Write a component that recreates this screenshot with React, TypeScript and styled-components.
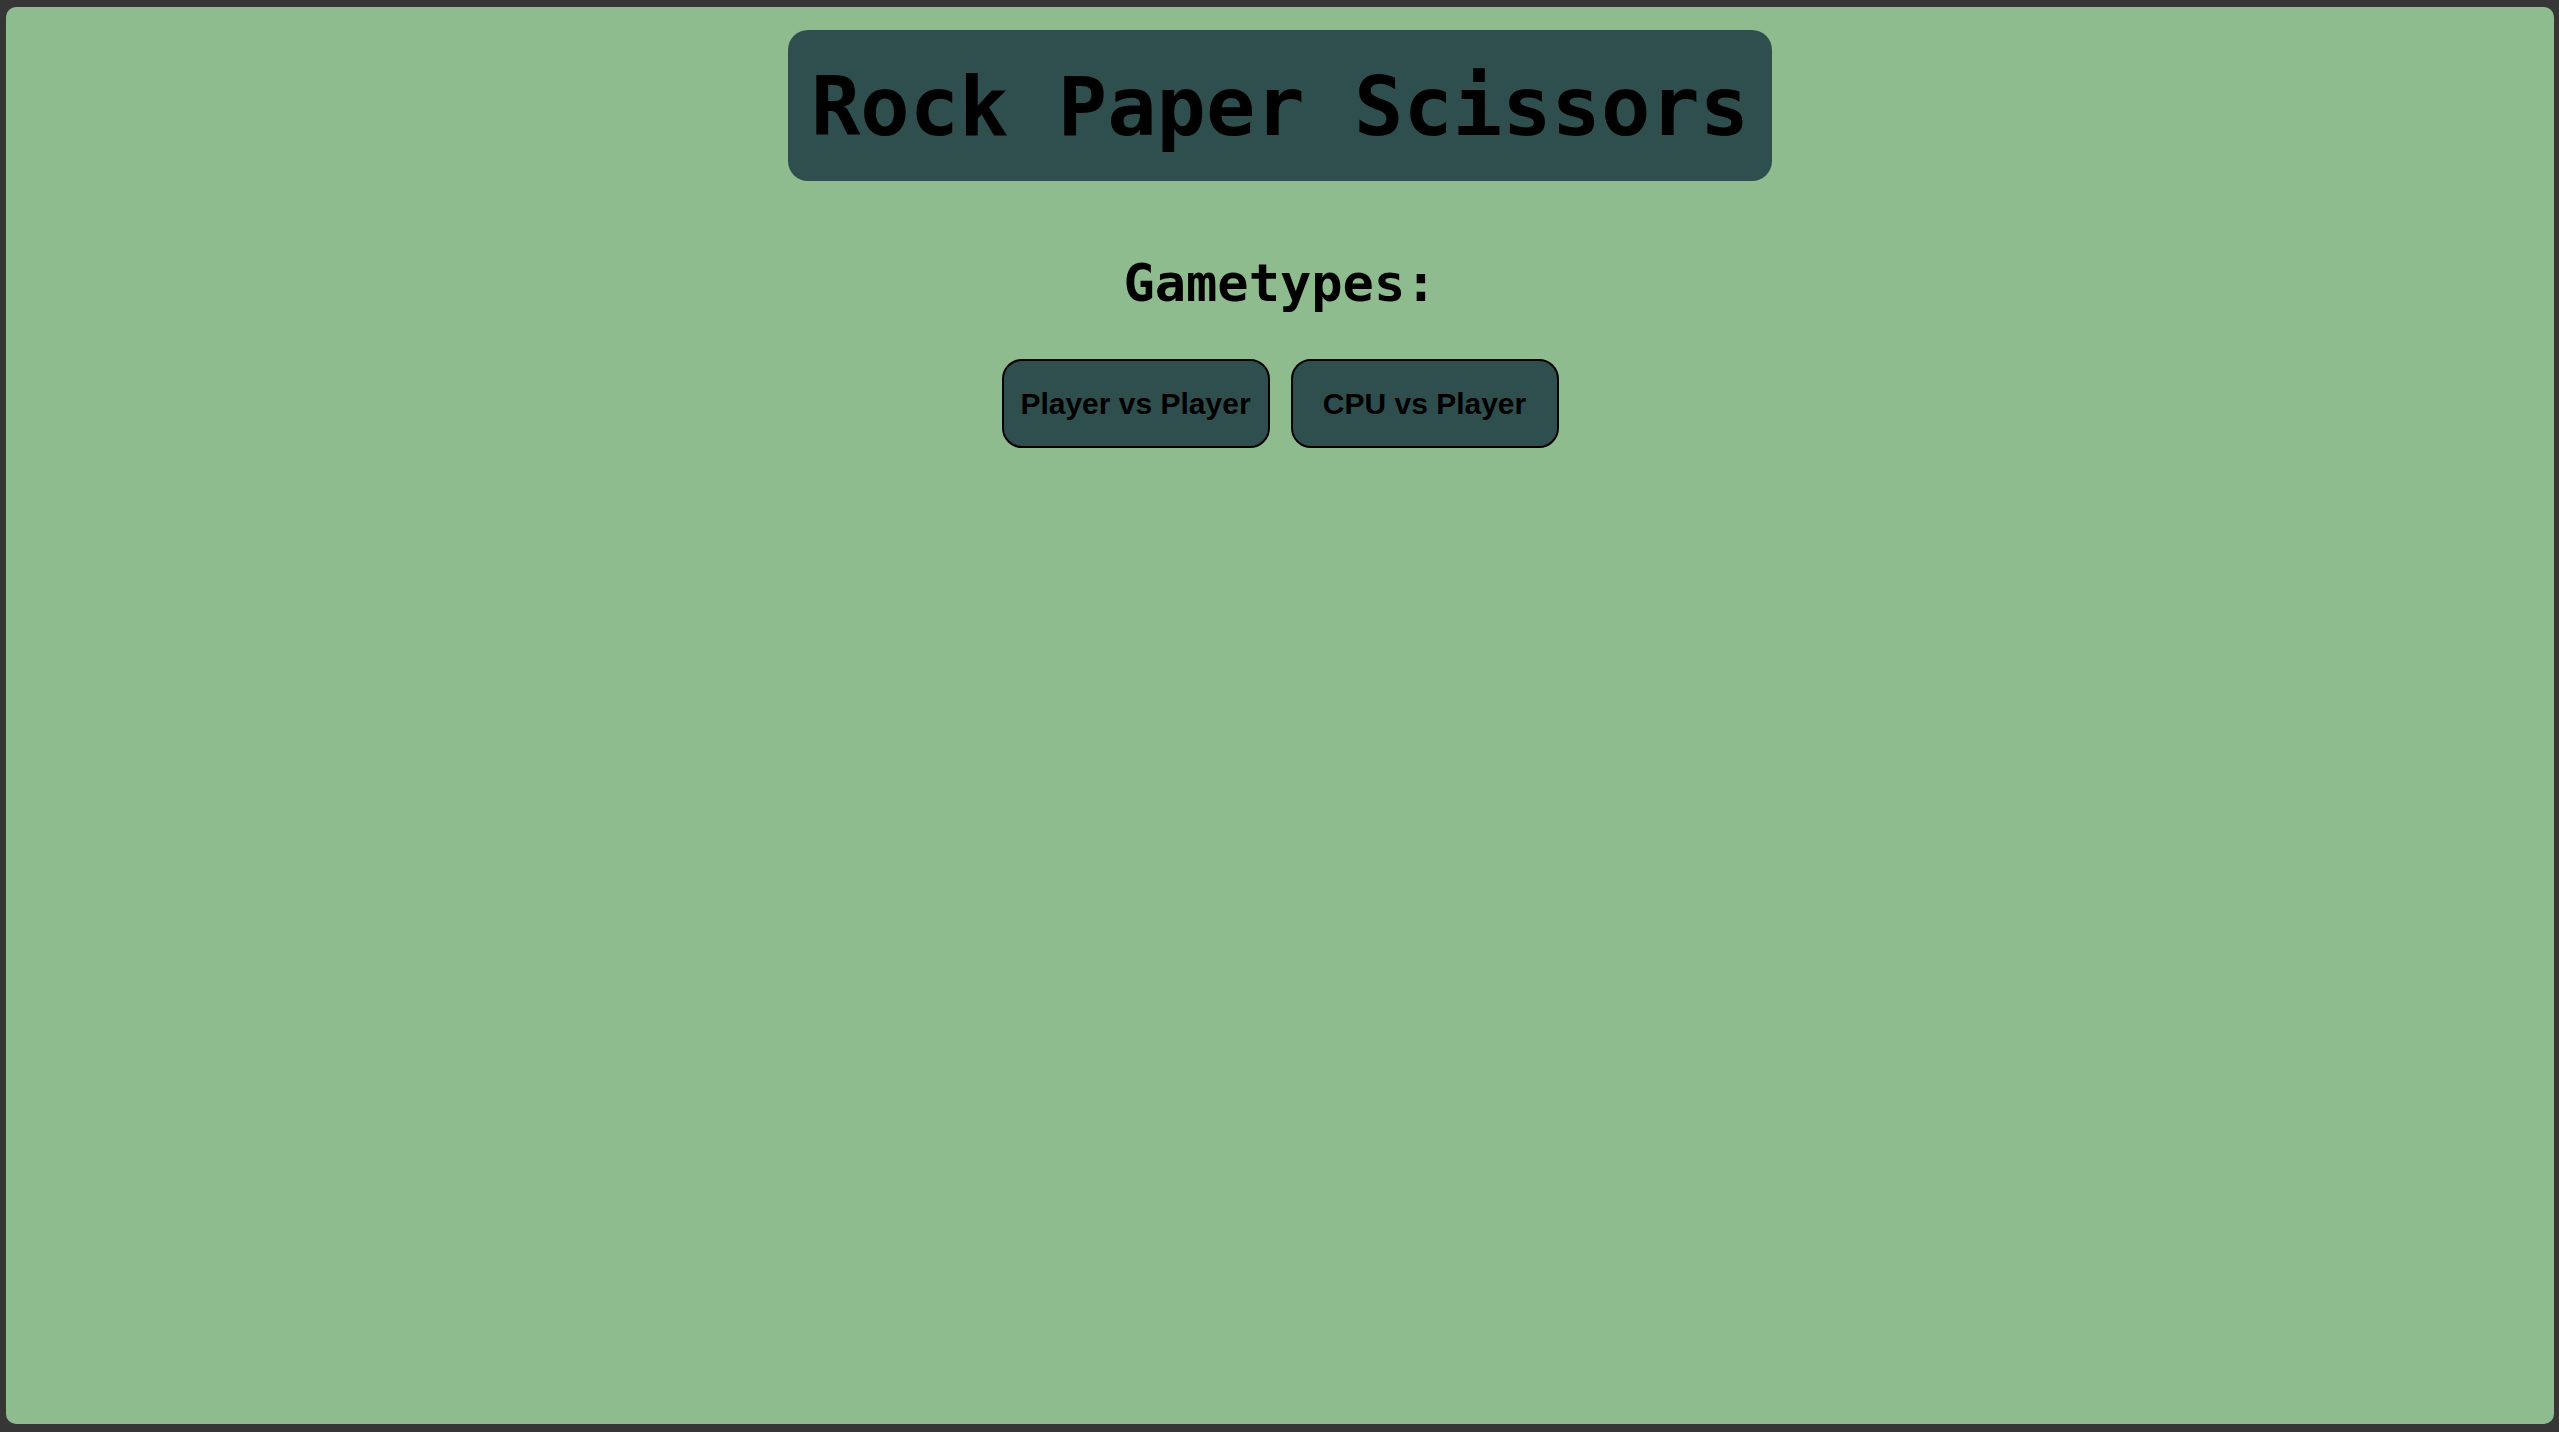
import React from "react";
import styled, { createGlobalStyle } from "styled-components";

const GlobalStyle = createGlobalStyle`
  html, body {
    margin: 0;
    padding: 0;
    background: #363636;
  }
  #root {
    min-height: 100vh;
  }
`;

const Frame = styled.main`
  box-sizing: border-box;
  margin: 7px 5px 0 6px;
  height: calc(100vh - 15px);
  background: #8fbc8f;
  border-radius: 10px;
  display: flex;
  flex-direction: column;
  align-items: center;
  overflow: hidden;
`;

const Title = styled.h1`
  margin: 23px 0 0;
  padding: 29px 23px 27px;
  background: #2f4f4f;
  border-radius: 20px;
  font-family: "DejaVu Sans Mono", monospace;
  font-weight: bold;
  font-size: 82px;
  line-height: 95px;
  color: #000;
  white-space: nowrap;
`;

const SectionHeading = styled.h2`
  margin: 72px 0 0;
  font-family: "DejaVu Sans Mono", monospace;
  font-weight: bold;
  font-size: 52px;
  line-height: 60px;
  color: #000;
`;

const ButtonRow = styled.div`
  display: flex;
  gap: 21px;
  margin-top: 46px;
`;

const ModeButton = styled.button`
  box-sizing: border-box;
  width: 268px;
  height: 89px;
  background: #2f4f4f;
  border: 2px solid #000;
  border-radius: 20px;
  font-family: "Liberation Sans", Arial, sans-serif;
  font-weight: bold;
  font-size: 30px;
  color: #000;
  cursor: pointer;
  padding: 0;
`;

export default function App() {
  return (
    <>
      <GlobalStyle />
      <Frame>
        <Title>Rock Paper Scissors</Title>
        <SectionHeading>Gametypes:</SectionHeading>
        <ButtonRow>
          <ModeButton>Player vs Player</ModeButton>
          <ModeButton>CPU vs Player</ModeButton>
        </ButtonRow>
      </Frame>
    </>
  );
}
